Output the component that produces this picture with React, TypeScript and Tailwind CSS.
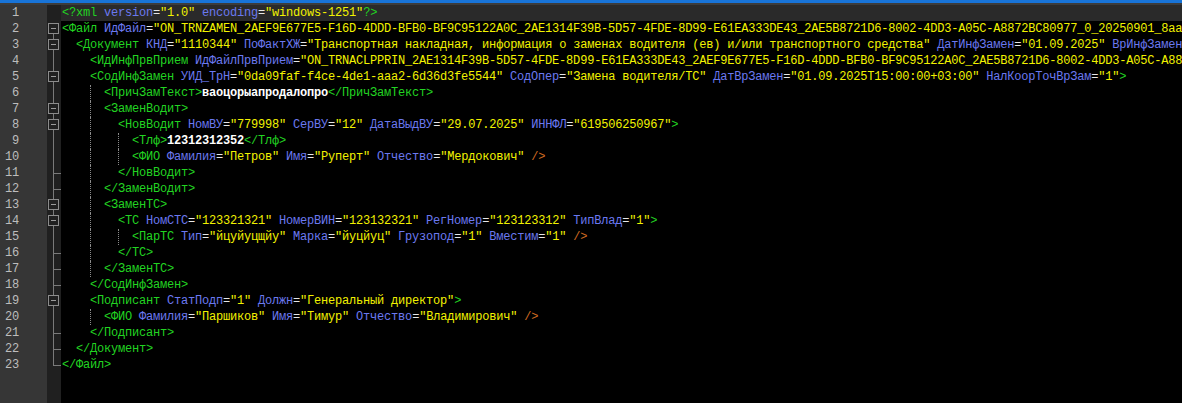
import React from 'react';

type Fold = 'none' | 'boxStart' | 'box' | 'line' | 'tick' | 'end';

type Line = {
  indent: number;
  src: string;
  fold: Fold;
};

const lines: Line[] = [
  { indent: 0, fold: 'none', src: '<?xml version="1.0" encoding="windows-1251"?>' },
  { indent: 0, fold: 'boxStart', src: '<Файл ИдФайл="ON_TRNZAMEN_2AEF9E677E5-F16D-4DDD-BFB0-BF9C95122A0C_2AE1314F39B-5D57-4FDE-8D99-E61EA333DE43_2AE5B8721D6-8002-4DD3-A05C-A8872BC80977_0_20250901_8aa4c2e1-5b7d-4f0a-9c3e-1d2f3a4b5c6d" ВерсФорм="1.00" ВерсПрог="1.0">' },
  { indent: 2, fold: 'box', src: '<Документ КНД="1110344" ПоФактХЖ="Транспортная накладная, информация о заменах водителя (ев) и/или транспортного средства" ДатИнфЗамен="01.09.2025" ВрИнфЗамен="15.00.00">' },
  { indent: 4, fold: 'line', src: '<ИдИнфПрвПрием ИдФайлПрвПрием="ON_TRNACLPPRIN_2AE1314F39B-5D57-4FDE-8D99-E61EA333DE43_2AEF9E677E5-F16D-4DDD-BFB0-BF9C95122A0C_2AE5B8721D6-8002-4DD3-A05C-A8872BC80977_0_20250901" />' },
  { indent: 4, fold: 'box', src: '<СодИнфЗамен УИД_ТрН="0da09faf-f4ce-4de1-aaa2-6d36d3fe5544" СодОпер="Замена водителя/ТС" ДатВрЗамен="01.09.2025T15:00:00+03:00" НалКоорТочВрЗам="1">' },
  { indent: 6, fold: 'line', src: '<ПричЗамТекст>ваоцорыапродалопро</ПричЗамТекст>' },
  { indent: 6, fold: 'box', src: '<ЗаменВодит>' },
  { indent: 8, fold: 'box', src: '<НовВодит НомВУ="779998" СерВУ="12" ДатаВыдВУ="29.07.2025" ИННФЛ="619506250967">' },
  { indent: 10, fold: 'line', src: '<Тлф>12312312352</Тлф>' },
  { indent: 10, fold: 'line', src: '<ФИО Фамилия="Петров" Имя="Руперт" Отчество="Мердокович" />' },
  { indent: 8, fold: 'tick', src: '</НовВодит>' },
  { indent: 6, fold: 'tick', src: '</ЗаменВодит>' },
  { indent: 6, fold: 'box', src: '<ЗаменТС>' },
  { indent: 8, fold: 'box', src: '<ТС НомСТС="123321321" НомерВИН="123132321" РегНомер="123123312" ТипВлад="1">' },
  { indent: 10, fold: 'line', src: '<ПарТС Тип="йцуйуцщйу" Марка="йуцйуц" Грузопод="1" Вместим="1" />' },
  { indent: 8, fold: 'tick', src: '</ТС>' },
  { indent: 6, fold: 'tick', src: '</ЗаменТС>' },
  { indent: 4, fold: 'tick', src: '</СодИнфЗамен>' },
  { indent: 4, fold: 'box', src: '<Подписант СтатПодп="1" Должн="Генеральный директор">' },
  { indent: 6, fold: 'line', src: '<ФИО Фамилия="Паршиков" Имя="Тимур" Отчество="Владимирович" />' },
  { indent: 4, fold: 'tick', src: '</Подписант>' },
  { indent: 2, fold: 'tick', src: '</Документ>' },
  { indent: 0, fold: 'end', src: '</Файл>' },
];

type Kind = 'tag' | 'attr' | 'eq' | 'val' | 'close' | 'text';

const colors: Record<Kind, string> = {
  tag: 'text-[#22d422]',
  attr: 'text-[#6b79f0]',
  eq: 'text-[#e8e8e8]',
  val: 'text-[#f2f200]',
  close: 'text-[#d06a20]',
  text: 'text-white font-bold',
};

const tokenRe = /(<\/?\??[^\s>\/?]+)|(\s+[^\s="<>\/]+(?==))|(=)|("[^"]*")|(\s*\/>)|(\?>|>)|([^<]+)/g;

function tokenize(src: string): { kind: Kind; text: string }[] {
  const out: { kind: Kind; text: string }[] = [];
  const kinds: Kind[] = ['tag', 'attr', 'eq', 'val', 'close', 'tag', 'text'];
  for (const m of src.matchAll(tokenRe)) {
    const idx = m.slice(1).findIndex((g) => g !== undefined);
    out.push({ kind: kinds[idx], text: m[0] });
  }
  return out;
}

const FoldMark: React.FC<{ fold: Fold }> = ({ fold }) => (
  <svg width="14" height="16" className="block" shapeRendering="crispEdges">
    <g stroke="#7a7a7a" strokeWidth="1" fill="none">
      {(fold === 'line' || fold === 'tick') && <line x1="6.5" y1="0" x2="6.5" y2="16" />}
      {fold === 'end' && <path d="M6.5 0 V8.5 H14" />}
      {fold === 'tick' && <line x1="6.5" y1="8.5" x2="14" y2="8.5" />}
      {fold === 'box' && <line x1="6.5" y1="0" x2="6.5" y2="2.5" />}
      {(fold === 'box' || fold === 'boxStart') && (
        <>
          <line x1="6.5" y1="12.5" x2="6.5" y2="16" />
          <rect x="1.5" y="2.5" width="10" height="10" stroke="#8c8c8c" fill="#202020" />
          <line x1="4" y1="7.5" x2="9" y2="7.5" stroke="#9a9a9a" />
        </>
      )}
    </g>
  </svg>
);

// leading whitespace, with dotted guides at every 4th column (tab width 4)
const Indent: React.FC<{ cols: number }> = ({ cols }) => {
  const parts: { from: number; to: number }[] = [];
  for (let c = 0; c < cols; c += 4) parts.push({ from: c, to: Math.min(cols, c + 4) });
  return (
    <>
      {parts.map((p) => (
        <span
          key={p.from}
          className={
            p.from === 0
              ? 'inline-block h-[16px] align-top'
              : 'inline-block h-[16px] align-top border-l border-dotted border-[#8a8a8a]'
          }
          style={{ width: (p.to - p.from) * 7 }}
        />
      ))}
    </>
  );
};

const App: React.FC = () => {
  return (
    <div
      className="w-[1182px] h-[403px] overflow-hidden bg-black flex flex-col text-[12px] leading-[16px] tracking-[-0.2px]"
      style={{ fontFamily: '"Liberation Mono", "Courier New", monospace' }}
    >
      <div className="h-[3px] bg-[#1874d8] shrink-0" />
      <div className="h-[2px] bg-[#3c3c3c] shrink-0" />

      <div className="flex flex-1 min-h-0">
        {/* Line numbers */}
        <div className="w-[47px] shrink-0 bg-[#363636] text-[#bdbdbd]">
          {lines.map((_, i) => (
            <div key={i} className="h-[16px] w-[19px] text-right">
              {i + 1}
            </div>
          ))}
        </div>

        {/* Fold margin */}
        <div className="w-[14px] shrink-0 bg-[#202020]">
          {lines.map((l, i) => (
            <FoldMark key={i} fold={l.fold} />
          ))}
        </div>

        {/* Code */}
        <div className="flex-1 min-w-0 overflow-hidden">
          {lines.map((l, i) => (
            <div
              key={i}
              className={
                i === 0
                  ? 'h-[16px] whitespace-pre pl-[1px] bg-[#2a2a2a]'
                  : 'h-[16px] whitespace-pre pl-[1px]'
              }
            >
              <Indent cols={l.indent} />
              {tokenize(l.src).map((t, j) => (
                <span key={j} className={colors[t.kind]}>
                  {t.text}
                </span>
              ))}
            </div>
          ))}
        </div>
      </div>
    </div>
  );
};

export default App;
